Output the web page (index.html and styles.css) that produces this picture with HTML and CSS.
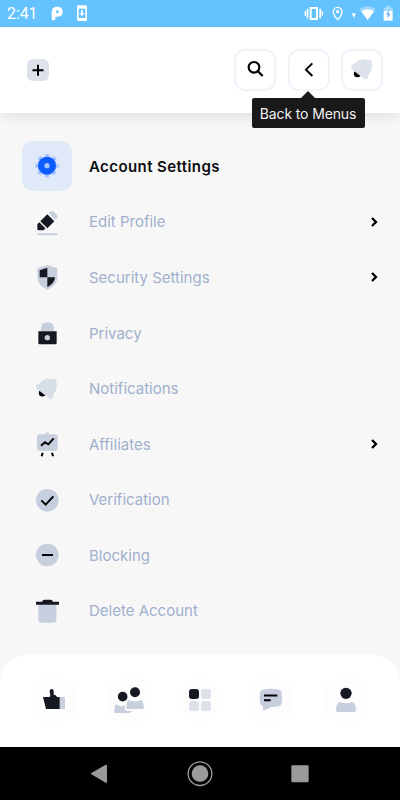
FILE: index.html
```html
<!DOCTYPE html>
<html lang="en">
<head>
<meta charset="utf-8">
<title>Account Settings</title>
<link rel="stylesheet" href="styles.css">
</head>
<body>
<div class="app">
  <div class="status">
    <span class="clock">2:41</span>
    <svg class="status-left" viewBox="150 0 120 78">
      <path d="M155 59V37q0-17 17-17 16 0 16 15 0 14-15 15h-7v9q-7 4-11 0z" fill="#fff"/><circle cx="172" cy="35" r="4.500" fill="#64c3ff"/>
      <rect x="231" y="16" width="30" height="47" rx="4" fill="#fff"/><path d="M236 26h20v28h-20z" fill="#64c3ff"/><path d="M243.500 30h5v10h5l-7.500 9-7.500-9h5z" fill="#fff"/>
    </svg>
    <svg class="status-right" viewBox="310 0 290 78" fill="#fff">
      <path d="M330 21h25v39h-25z M336 27v27h13V27z" fill-rule="evenodd"/>
      <path d="M321 26h5v29h-5zM359 26h5v29h-5zM315 33h4v15h-4zM366 33h4v15h-4z"/>
      <path d="M414 22c-8 0-13 6-13 13 0 10 13 24 13 24s13-14 13-24c0-7-5-13-13-13z" fill="none" stroke="#fff" stroke-width="4"/><circle cx="414" cy="35" r="5"/>
      <path d="M456 40h13l-6.500 13z"/>
      <path d="M479 27q25-17 50 0l-25 33z" opacity=".35"/><path d="M485 34q19-13 38 0l-19 26z"/>
      <path d="M559 18h14v6h6v10h-27V24h7z" opacity=".4"/><path d="M552 33h27v29h-27z"/><path d="M568 31l-9 13h6l-2 12 10-15h-6z" fill="#64aff0"/>
    </svg>
  </div>

  <header class="header">
    <div class="plus"><svg viewBox="80 177 66 66"><path d="M113 194v33M96.500 210.500h33" stroke="#000" stroke-width="6"/></svg></div>
    <div class="actions">
      <div class="action"><svg viewBox="103 147 126 126" fill="none" stroke="#000" stroke-width="6.500"><circle cx="163" cy="202" r="16"/><path d="M174 213l15 15"/></svg></div>
      <div class="action"><svg viewBox="264 147 126 126" fill="none" stroke="#000" stroke-width="6"><path d="M337 190l-19 19 19 19"/></svg>
        <div class="tooltip">Back to Menus</div>
      </div>
      <div class="action"><svg viewBox="48 8 126 126"><circle cx="97" cy="82" r="10.500" fill="#000"/><path d="M78 60q1-4 8-6 7-4 12-10 8-6 18-5 6 0 11 3 5-5 11-1 5 5 1 10 3 8 1 17-2 9-8 15l-3 10q-2 9-10 6L84 72q-7-7-6-12z" fill="#dce1eb"/></svg></div>
    </div>
  </header>

  <main class="menu">
    <div class="row active">
      <svg class="icon" viewBox="36 33 150 150"><circle cx="111" cy="107" r="29" fill="#a4c3ff"/><circle cx="111" cy="107" r="30.500" fill="none" stroke="#a4c3ff" stroke-width="9" stroke-dasharray="11.950 12" stroke-dashoffset="6"/><circle cx="111" cy="107" r="27" fill="#0a5cff"/><circle cx="111" cy="107" r="8" fill="#a4c3ff"/></svg>
      <span class="label">Account Settings</span>
    </div>
    <div class="row">
      <svg class="icon" viewBox="36 200 150 150"><path d="M116 248l6-5q5-3 9 1l10 10q4 4 0 9l-6 5z" fill="#c7cfde"/><path d="M112 252l21 21-21 21-21-21zM88 276l18 18-5 6H86q-4 0-4-4v-14z" fill="#171922"/><path d="M82 309h60v6H82z" fill="#c7cfde"/></svg>
      <span class="label">Edit Profile</span>
      <svg class="chevron" viewBox="0 0 30 36"><path d="M9 6l12 12L9 30"/></svg>
    </div>
    <div class="row">
      <svg class="icon" viewBox="36 6 150 150"><path d="M112 45l28 9q2 1 2 4v23q0 24-30 39-30-15-30-39V58q0-3 2-4z" fill="#c7cfde"/><path d="M112 53v29H89V61zM112 82h23q-1 17-22 29h-1z" fill="#171922"/></svg>
      <span class="label">Security Settings</span>
      <svg class="chevron" viewBox="0 0 30 36"><path d="M9 6l12 12L9 30"/></svg>
    </div>
    <div class="row">
      <svg class="icon" viewBox="36 173 150 150"><path d="M93 243v-8q0-19 19.500-19t19.500 19v8z" fill="#c7cfde"/><path d="M85 243h55v35q0 4-4 4H89q-4 0-4-4z" fill="#171922"/><circle cx="112" cy="262" r="8" fill="#c7cfde"/></svg>
      <span class="label">Privacy</span>
    </div>
    <div class="row">
      <svg class="icon" viewBox="36 -5 150 150"><circle cx="97" cy="82" r="10.500" fill="#000"/><path d="M78 60q1-4 8-6 7-4 12-10 8-6 18-5 6 0 11 3 5-5 11-1 5 5 1 10 3 8 1 17-2 9-8 15l-3 10q-2 9-10 6L84 72q-7-7-6-12z" fill="#d8dee8"/></svg>
      <span class="label">Notifications</span>
    </div>
    <div class="row">
      <svg class="icon" viewBox="36 161 150 150"><path d="M109 208v-4q3-5 6 0v4z" stroke="#c7cfde" stroke-width="3" fill="#c7cfde"/><rect x="81" y="207" width="62" height="49" rx="9" fill="#c7cfde"/><path d="M93 241l12-10 10 6 16-18" fill="none" stroke="#000" stroke-width="6"/><path d="M98 262l-3 11M126 262l3 11" stroke="#000" stroke-width="6"/></svg>
      <span class="label">Affiliates</span>
      <svg class="chevron" viewBox="0 0 30 36"><path d="M9 6l12 12L9 30"/></svg>
    </div>
    <div class="row">
      <svg class="icon" viewBox="36 -17 150 150"><circle cx="112" cy="59" r="34" fill="#c7cfde"/><path d="M94 59l13 13 23-25" fill="none" stroke="#000" stroke-width="6"/></svg>
      <span class="label">Verification</span>
    </div>
    <div class="row">
      <svg class="icon" viewBox="36 150 150 150"><circle cx="112" cy="225" r="34" fill="#c7cfde"/><path d="M96 225h33" stroke="#000" stroke-width="6"/></svg>
      <span class="label">Blocking</span>
    </div>
    <div class="row">
      <svg class="icon" viewBox="36 316 150 150"><path d="M85 371h54v47q0 8-8 8H93q-8 0-8-8z" fill="#c7cfde"/><path d="M78 363h18q2-6 7-6h19q5 0 7 6h18v9H78z" fill="#171922"/></svg>
      <span class="label">Delete Account</span>
    </div>
  </main>

  <nav class="tabs">
    <div class="tab"><svg viewBox="99 117 126 126"><path d="M178 171h17v36h-17z" fill="#c7cfde"/><path d="M129 171h20l2-6q-2-9-2-13 1-5 6-5 6 0 6 6v11q7 0 10 7h8v36h-41z" fill="#171922"/></svg></div>
    <div class="tab"><svg viewBox="324 117 126 126"><path d="M342 215q0-15 6-22 19 10 27 2v13q2 5 8 5h12q-1 6-8 6h-41q-4 0-4-4z" fill="#c7cfde"/><path d="M379 203q0-17 7-23 18 8 38-1 8 9 8 24 0 4-4 4h-45q-4 0-4-4z" fill="#c7cfde"/><circle cx="368" cy="170" r="14.500" fill="#171922"/><circle cx="405" cy="157" r="15" fill="#171922"/></svg></div>
    <div class="tab narrow"><svg viewBox="549 117 102 126" fill="#dce1ea"><rect x="567" y="147" width="30" height="30" rx="9" fill="#171922"/><rect x="603" y="147" width="30" height="30" rx="9"/><rect x="567" y="183" width="30" height="30" rx="9"/><rect x="603" y="183" width="30" height="30" rx="9"/></svg></div>
    <div class="tab"><svg viewBox="150 117 126 126"><path d="M180 157q1-6 8-8 25-5 49 0 7 1 8 8 2 16 0 33-1 7-8 9-11 2-23 2l-25 12v-15q-8-1-9-9-2-15 0-32z" fill="#c7cfde"/><path d="M192 166.500h40M192 180.500h20" stroke="#000" stroke-width="6"/></svg></div>
    <div class="tab"><svg viewBox="375 117 126 126"><circle cx="438" cy="160" r="17" fill="#171922"/><path d="M416 186q22 7 44 0 8 10 8 24 0 6-6 6h-48q-6 0-6-6 0-14 8-24z" fill="#c7cfde"/></svg></div>
  </nav>

  <footer class="system">
    <svg viewBox="0 320 1200 160" fill="#9a9a9a"><path d="M319 373q2 0 2 3v49q0 4-4 2l-43-25q-2-2 0-4l43-25z"/><circle cx="600" cy="400" r="25"/><circle cx="600" cy="400" r="35.500" fill="none" stroke="#9a9a9a" stroke-width="4"/><rect x="874" y="375" width="52" height="51" rx="3"/></svg>
  </footer>
</div>
</body>
</html>
```
FILE: styles.css
```css
* { box-sizing: border-box; }
body { margin: 0; background: #f7f7f7; font-family: Inter, sans-serif; }
svg { display: block; }
.app { width: 400px; height: 800px; display: flex; flex-direction: column; overflow: hidden; background: #f7f7f7; }

.status { height: 26.500px; flex: none; display: flex; background: #64c3ff; color: #fff; padding-left: 7px; }
.clock { width: 43px; font: 400 16px/28px Roboto, sans-serif; letter-spacing: -.1px; }
.status-left { width: 40px; height: 26px; }
.status-right { width: 96.670px; height: 26px; margin-left: auto; }

.header { height: 86.500px; flex: none; display: flex; justify-content: space-between; align-items: flex-start; padding: 22.500px 17px 0 27px; background: #fff; box-shadow: 0 5px 12px -2px rgba(0, 0, 0, .1); position: relative; z-index: 1; }
.plus { width: 22px; height: 22px; margin-top: 10px; border-radius: 6px; background: #dce1eb; }
.actions { display: flex; gap: 11.500px; }
.action { width: 42px; height: 42px; border: 2px solid #eff3fa; border-radius: 11px; position: relative; }
.action svg { width: 42px; height: 42px; margin: -2px; }
.tooltip { position: absolute; left: -38px; top: 47px; width: 113px; height: 30px; border-radius: 2px; background: #191919; color: #f2f2f2; font-size: 14px; line-height: 31px; text-align: center; white-space: nowrap; letter-spacing: -.13px; }
.tooltip::before { content: ""; position: absolute; left: 49px; top: -7px; border: 7px solid transparent; border-top: 0; border-bottom-color: #191919; }

.menu { flex: 1; padding: 25.600px 20px 0 22px; }
.row { height: 55.560px; display: flex; align-items: center; color: #a0b0cd; }
.icon { width: 50px; height: 50px; flex: none; border-radius: 11px; }
.active .icon { background: #dfe9f8; }
.label { margin-left: 17px; font-size: 15px; line-height: 20px; padding-top: 1px; }
.active .label { color: #0b0d0f; font-weight: 600; letter-spacing: .42px; }
.chevron { width: 10px; height: 12px; margin-left: auto; margin-right: 1px; fill: none; stroke: #000; stroke-width: 7px; }

.tabs { height: 92.500px; flex: none; display: flex; justify-content: space-between; padding: 24.500px 33px 0; background: #fff; border-radius: 30px 30px 0 0; }
.tab { width: 42px; height: 42px; border-radius: 9px; background: #fdfdfd; }
.narrow { width: 34px; }
.system { height: 53.500px; flex: none; background: #000; }
.system svg { width: 400px; height: 53.330px; }
```
